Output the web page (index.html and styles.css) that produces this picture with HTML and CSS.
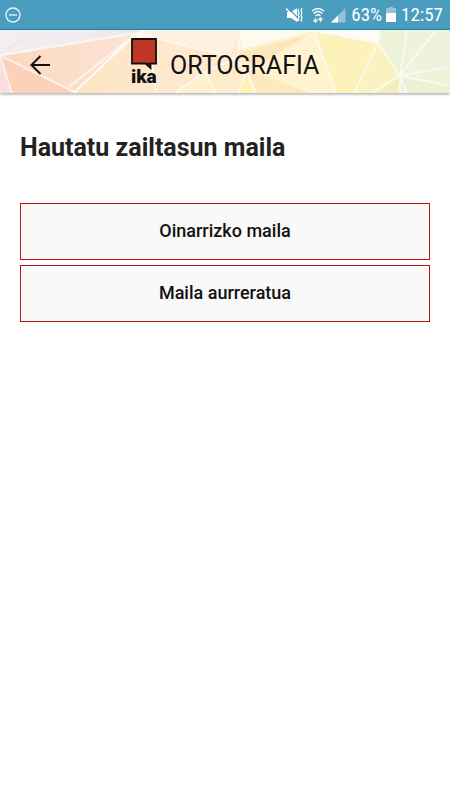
FILE: index.html
```html
<!DOCTYPE html>
<html lang="eu">
<head>
<meta charset="utf-8">
<meta name="viewport" content="width=device-width, initial-scale=1">
<title>Ortografia</title>
<link rel="stylesheet" href="styles.css">
</head>
<body>
<div class="status">
  <svg class="dnd" width="16" height="16" viewBox="0 0 16 16" fill="none" stroke="#e6f6fb"><circle cx="8" cy="8" r="7" stroke-width="1.3"/><path d="M4 8h8" stroke-width="1.3"/></svg>
  <div class="status-info">
    <svg width="17" height="16" viewBox="0 0 17 16"><path d="M1 5h4l6-4v14l-6-4H1z" fill="#fff"/><path d="M1 0l12 12" stroke="#4a9dbf" stroke-width="1.200"/><path d="M0 1.500l12 12.500" stroke="#fff" stroke-width="1.500"/><path d="M13 2l-1 2 1.200 2-1.200 2 1.200 2-1.200 2 1 2M16 1l-1 2.500 1 2-1 2.500 1 2.500-1 2.500 1 1.500" fill="none" stroke="#fff" stroke-width="1.200"/></svg>
    <svg class="wifi" width="14" height="16" viewBox="0 0 14 16" fill="none" stroke="#fff" stroke-width="1.300"><path d="M1 4q6-5 12 0M2.500 6.500q4.500-4 9 0M4.500 9q2.500-2.500 5 0"/><path d="M4.500 15v-4M2.500 13l2 2 2-2M9.500 11v4M7.500 13l2-2 2 2"/></svg>
    <svg class="signal" width="16" height="16" viewBox="0 0 16 16"><path d="M1 15.500L15.500 1v14.500z" fill="#92c4d9"/><path d="M1 15.500L8 8.500v7z" fill="#fff"/></svg>
    <span class="percent">63%</span>
    <svg class="battery" width="10" height="15" viewBox="0 0 10 15"><path d="M3 0h4v1h3v5H0V1h3z" fill="#92c4d9"/><path d="M0 6h10v9H0z" fill="#fff"/></svg>
    <span>12:57</span>
  </div>
</div>
<header class="bar">
  <svg class="pattern" viewBox="0 0 450 62" preserveAspectRatio="none" aria-hidden="true">
    <defs>
      <linearGradient id="grey" x2="1"><stop stop-color="#f2eff1"/><stop offset="1" stop-color="#f1e8ea"/></linearGradient>
      <linearGradient id="peach" x2="1"><stop stop-color="#fcd8bf"/><stop offset="1" stop-color="#fbe4d4"/></linearGradient>
      <linearGradient id="cream" x2="1"><stop stop-color="#fee4c4"/><stop offset=".5" stop-color="#feebcf"/><stop offset="1" stop-color="#fff5d5"/></linearGradient>
    </defs>
    <path d="M0 0h140v4L0 25z" fill="url(#grey)"/>
    <path d="M0 25L135 3 74 61z" fill="url(#peach)"/>
    <path d="M0 25l12 37H0z" fill="#f9dedf"/>
    <path d="M0 25l74 36v1H12z" fill="#fcd0b9"/>
    <path d="M74 62L137 3 340 0v62z" fill="url(#cream)"/>
    <path d="M136 4l16 29-7-33z" fill="#fff4e8"/>
    <path d="M136 3L228 27 241 0h-94z" fill="#fff0e0"/>
    <path d="M241 0h75l-75 19z" fill="#fffaf0"/>
    <path d="M150 5l86 22-28 18-33 17z" fill="#fee9cf"/>
    <path d="M205 41l11 21h-41z" fill="#fff0ce"/>
    <path d="M205 41l33-14 9 14-32 21z" fill="#fdebc9"/>
    <path d="M239 23l69-18-49 37z" fill="#fce7bd"/>
    <path d="M246 41l9 21h-16z" fill="#fff3ae"/>
    <path d="M246 41l65-37 26 58h-82z" fill="#fff3d0"/>
    <path d="M246 38l64 24h-52z" fill="#fee9bf"/>
    <path d="M314 2l64 11-23 49h-20z" fill="#fdf2b9"/>
    <path d="M314 2l-2-2h67v12z" fill="#fefcf7"/>
    <path d="M378 13l22 32-28 17h-18z" fill="#faf2c1"/>
    <path d="M372 62l28-17v17z" fill="#f4edbf"/>
    <path d="M379 0h71v62h-50V45l-22-32z" fill="#eff3d9"/>
    <path d="M379 0h28l-7 45-22-32z" fill="#edf3d8"/>
    <path d="M400 45l36-45h14v36z" fill="#edf3dc"/>
    <path d="M400 45l50 10v7h-44z" fill="#ecf1d5"/>
    <g fill="none" stroke="#fff" stroke-width="2" opacity=".65">
      <path d="M0 25L137 3M0 25l12 37M0 25l74 36M69 56L137 3 74 62M137 3l15 30 4 29"/>
      <path d="M137 3l99 25 10 13M241 0l-3 27-33 14-30 21M205 41l11 21M246 41l-7 21M246 41l9 21"/>
      <path d="M314 2l22 60M378 13l-24 49M378 13l22 32-28 17M400 45v17M400 45l7 17M400 45l50 10M400 45l50-9M400 45l36-45M400 45l7-45M378 13l3-13"/>
    </g>
    <path d="M0 23L38 0" fill="none" stroke="#e9e4e8"/>
  </svg>
  <button class="back" aria-label="Atzera"><svg width="20" height="20" viewBox="0 0 20 20" fill="none" stroke="#111" stroke-width="2"><path d="M20 10H2M10.500 1L1.500 10l9 9"/></svg></button>
  <div class="logo">
    <svg width="27" height="32" viewBox="0 0 27 32"><path d="M1 1h24v24.500h-5.500V30l-5-4.500H1z" fill="#bf3824" stroke="#111" stroke-width="1.800"/><path d="M14 25h6v6z" fill="#111"/></svg>
    <span>ika</span>
  </div>
  <h1>ORTOGRAFIA</h1>
</header>
<main>
  <h2>Hautatu zailtasun maila</h2>
  <div class="levels">
    <button>Oinarrizko maila</button>
    <button>Maila aurreratua</button>
  </div>
</main>
</body>
</html>
```
FILE: styles.css
```css
* { box-sizing: border-box; }
body { margin: 0; background: #fff; color: #222; font-family: Roboto, sans-serif; }
svg { display: block; flex: none; }
.status { height: 30px; padding: 0 7px 0 5px; display: flex; align-items: center; justify-content: space-between; background: #4a9dbf; border-bottom: 1px solid #1b8fb5; color: #fff; font-family: "Roboto Condensed", Roboto, sans-serif; font-size: 19px; line-height: 28px; }
.status-info { display: flex; align-items: center; }
.wifi { margin-left: 8px; }
.signal { margin-left: 5px; }
.percent { margin-left: 5px; }
.battery { margin: 0 5px 0 4px; }
.bar { position: relative; height: 63px; padding-left: 20px; display: flex; align-items: center; box-shadow: 0 1px 3px rgba(0, 0, 0, .4); }
.pattern { position: absolute; inset: 0; width: 100%; height: 100%; }
.back { position: relative; width: 40px; height: 48px; margin-top: 7px; padding: 0 0 0 10px; border: 0; background: none; }
.logo { position: relative; width: 27px; margin: 0 0 2px 71px; color: #111; }
.logo span { display: block; height: 14px; font-size: 19px; font-weight: 900; line-height: 14px; }
h1 { position: relative; margin: 9px 0 0 12px; color: #111; font-size: 25px; font-weight: 400; line-height: 32px; }
main { padding: 39px 20px; }
h2 { margin: 0; font-size: 25px; font-weight: 700; line-height: 32px; }
.levels { display: grid; gap: 5px; margin-top: 39px; }
.levels button { height: 57px; padding: 0 0 2px; border: 1px solid #b81414; border-radius: 0; background: #f9f9f9; color: #111; font: 500 18px/24px Roboto, sans-serif; }
```
